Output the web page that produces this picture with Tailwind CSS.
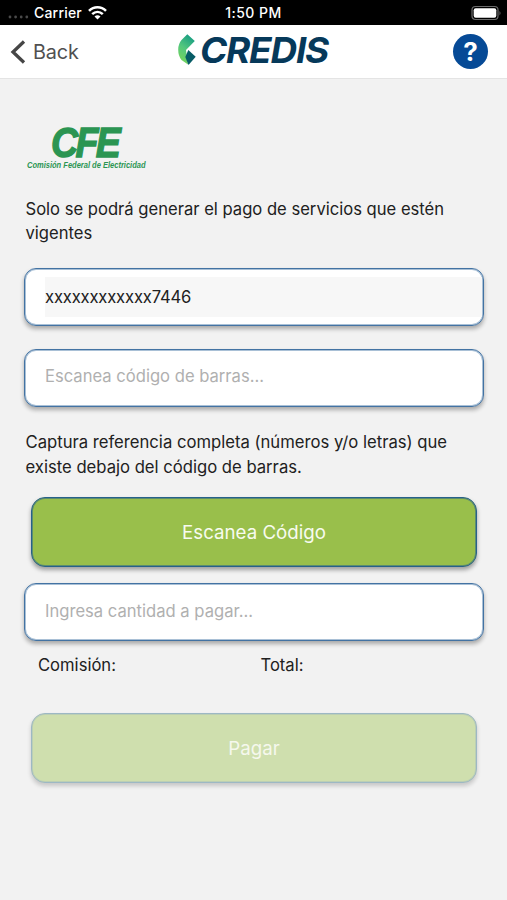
<!DOCTYPE html>
<html lang="es">
<head>
<meta charset="utf-8">
<title>Credis</title>
<script src="https://cdn.jsdelivr.net/npm/@tailwindcss/browser@4"></script>
</head>
<body class="bg-[#f2f2f2]">
<div class="w-[507px] h-[900px] overflow-hidden flex flex-col bg-[#f2f2f2] font-[Inter,sans-serif] text-[#212121]">
  <div class="h-[25px] shrink-0 bg-black text-white grid grid-cols-3 items-center text-[13.5px] font-medium leading-[23px]">
    <div class="flex items-center pl-2">
      <svg class="w-[22px] h-[25px]" viewBox="0 0 22 25" fill="#4a4a4a"><circle cx="2" cy="17" r="1.4"/><circle cx="7.600" cy="17" r="1.4"/><circle cx="13.200" cy="17" r="1.4"/><circle cx="18.800" cy="17" r="1.4"/></svg>
      <span class="ml-1 w-[49px] whitespace-nowrap text-[14px] tracking-[0.2px]">Carrier</span>
      <svg class="ml-[5px] w-[19px] h-[25px]" viewBox="0 0 19 25" fill="none" stroke="#fff" stroke-width="2.500"><path d="M1 10.900C5.800 6 13.200 6 18 10.900"/><path d="M4.200 14.200C7.300 11.100 11.700 11.100 14.800 14.200"/><path d="M9.500 19.500L6.500 16.500Q9.500 14 12.500 16.500Z" fill="#fff" stroke="none"/></svg>
    </div>
    <div class="text-center text-[14px] tracking-[0.45px]">1:50 PM</div>
    <div class="flex justify-end pr-[5px]">
      <svg class="w-[31px] h-[16px]" viewBox="0 0 31 16"><rect x="1" y="1.500" width="26" height="13" rx="3.500" fill="none" stroke="#6b6b6b" stroke-width="1.200"/><rect x="2.700" y="3.200" width="22.600" height="9.600" rx="2" fill="#fff"/><path d="M28.500 6q2 2.200 0 4.500z" fill="#6b6b6b"/></svg>
    </div>
  </div>
  <header class="h-[54px] shrink-0 bg-white border-b border-[#e4e4e4] grid grid-cols-3 items-center">
    <div class="flex items-center pl-[10px] text-[#505050]">
      <svg class="w-4 h-6" viewBox="0 0 16 24" fill="none" stroke="#464646" stroke-width="3.300"><path d="M14 1.500L3 12L14 22.500"/></svg>
      <span class="ml-[7px] text-[19.8px] leading-6 pt-px tracking-[-0.1px]">Back</span>
    </div>
    <div class="flex justify-center">
      <svg class="w-[160px] h-[44px] shrink-0 overflow-visible" viewBox="-2 -4 160 44">
        <defs><linearGradient id="leaf" x1="0.700" y1="0" x2="0.300" y2="1"><stop offset="0" stop-color="#159b83"/><stop offset="0.500" stop-color="#52c77d"/><stop offset="1" stop-color="#79d65b"/></linearGradient></defs>
        <path d="M11.300 0.300L18.800 7L10 16L12 30.500L5.500 26Q2.200 22 2.200 15.500Q2.200 10 5.500 6Z" fill="url(#leaf)"/>
        <path d="M12.300 16L19.700 22.800L12.500 31L9.300 23Z" fill="#075c66"/>
        <text x="24" y="29.300" textLength="128" lengthAdjust="spacingAndGlyphs" letter-spacing="-1.200" font-family="Inter, sans-serif" font-size="36" font-weight="700" font-style="italic" fill="#06395a">CREDIS</text>
      </svg>
    </div>
    <div class="flex justify-end pr-[19px]">
      <div class="w-[35px] h-[35px] rounded-full bg-[#064a96] text-white flex items-center justify-center text-[26px] font-bold leading-none">?</div>
    </div>
  </header>
  <main class="px-6 flex flex-col">
    <svg class="mt-[41px] ml-[2px] w-[122px] h-[54px] overflow-visible" viewBox="0 0 122 54" fill="#2b9552" font-family="Liberation Sans, Arial, sans-serif" font-weight="700" font-style="italic">
      <text x="25" y="36.700" textLength="67" lengthAdjust="spacingAndGlyphs" letter-spacing="-3" font-size="42" stroke="#2b9552" stroke-width="1.300">CFE</text>
      <text x="1" y="48" textLength="118.500" lengthAdjust="spacingAndGlyphs" font-size="9.800">Comisión Federal de Electricidad</text>
    </svg>
    <p class="mt-[23px] ml-[1.500px] text-[16.6px] leading-[24px] whitespace-nowrap">Solo se podrá generar el pago de servicios que estén<br>vigentes</p>
    <div class="mt-[23px] w-[460px] h-[58px] rounded-[12px] border border-[#4373a3] bg-white shadow-[inset_0_0_0_1px_#a9c0d6,0_3px_4px_rgba(0,0,0,0.3)] pl-[20px] pr-px flex items-center">
      <div class="h-10 w-full bg-[#f7f7f7] flex items-center text-[16.6px] tracking-[-0.17px]">xxxxxxxxxxxx7446</div>
    </div>
    <div class="mt-[23px] w-[460px] h-[58px] rounded-[12px] border border-[#4373a3] bg-white shadow-[inset_0_0_0_1px_#a9c0d6,0_3px_4px_rgba(0,0,0,0.3)] pl-5 pb-[3px] flex items-center text-[16.6px] text-[#b0b0b0]">Escanea código de barras...</div>
    <p class="mt-[23px] ml-[1.500px] text-[16.65px] leading-[24.500px] whitespace-nowrap">Captura referencia completa (números y/o letras) que<br>existe debajo del código de barras.</p>
    <div class="mt-[18px] ml-[7px] w-[446px] h-[70px] rounded-[14px] border border-[#27618a] bg-[#99bf4b] shadow-[inset_0_0_0_1px_#5c8c70,0_3px_4px_rgba(0,0,0,0.35)] flex items-center justify-center text-[18.7px] pt-[2px] text-[#f7fbef]">Escanea Código</div>
    <div class="mt-[16px] w-[460px] h-[58px] rounded-[12px] border border-[#4373a3] bg-white shadow-[inset_0_0_0_1px_#a9c0d6,0_3px_4px_rgba(0,0,0,0.3)] pl-5 pb-[2px] flex items-center text-[16.6px] text-[#b0b0b0]">Ingresa cantidad a pagar...</div>
    <div class="mt-[12px] pl-[14px] grid grid-cols-2 leading-6 text-[16.6px]"><span>Comisión:</span><span>Total:</span></div>
    <div class="mt-[36px] ml-[7px] w-[446px] h-[70px] rounded-[14px] border border-[#9db8c4] bg-[#cfdfae] shadow-[inset_0_0_0_1px_#bccfb4,0_3px_4px_rgba(0,0,0,0.18)] flex items-center justify-center text-[18.7px] pt-[2px] text-[#f5f8ed]">Pagar</div>
  </main>
</div>
</body>
</html>
